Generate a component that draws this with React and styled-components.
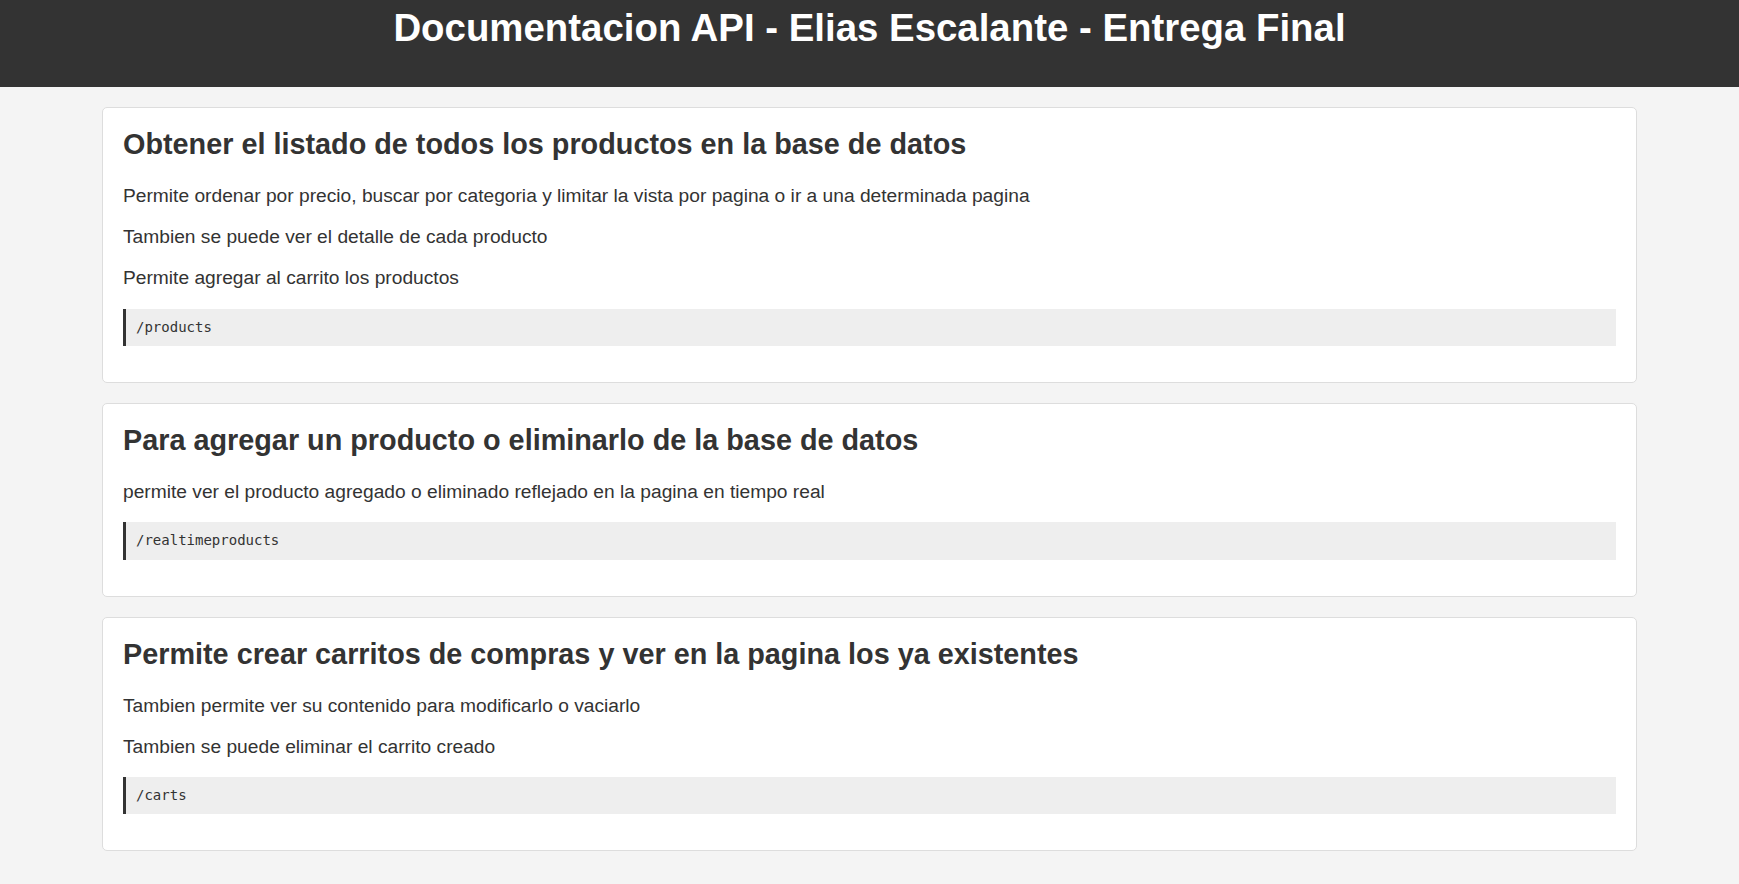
import React from "react";
import styled, { createGlobalStyle } from "styled-components";

const GlobalStyle = createGlobalStyle`
  html, body {
    margin: 0;
    padding: 0;
    background: #f4f4f4;
    font-family: "Liberation Sans", Arial, sans-serif;
    color: #333;
  }
`;

const Header = styled.header`
  background: #333;
  color: #fff;
  height: 87px;
  box-sizing: border-box;
  padding-top: 6px;
  text-align: center;
`;

const Title = styled.h1`
  margin: 0;
  font-size: 38.4px;
  font-weight: 700;
`;

const Main = styled.main`
  padding: 20px 102px;
  display: flex;
  flex-direction: column;
  gap: 20px;
`;

const Card = styled.section`
  background: #fff;
  border: 1px solid #ddd;
  border-radius: 5px;
  padding: 20px;
`;

const CardTitle = styled.h2`
  margin: 0 0 24px;
  font-size: 28.8px;
  font-weight: 700;
  color: #333;
`;

const Text = styled.p`
  margin: 0 0 19.2px;
  font-size: 19.2px;
  color: #333;
`;

const Endpoint = styled.pre`
  margin: 19.2px 0 16px;
  background: #eee;
  border-left: 3px solid #333;
  padding: 10px 10px;
  font-family: "DejaVu Sans Mono", "Liberation Mono", monospace;
  font-size: 14px;
  line-height: 17.4px;
  color: #333;
`;

const sections = [
  {
    title: "Obtener el listado de todos los productos en la base de datos",
    lines: [
      "Permite ordenar por precio, buscar por categoria y limitar la vista por pagina o ir a una determinada pagina",
      "Tambien se puede ver el detalle de cada producto",
      "Permite agregar al carrito los productos",
    ],
    path: "/products",
  },
  {
    title: "Para agregar un producto o eliminarlo de la base de datos",
    lines: [
      "permite ver el producto agregado o eliminado reflejado en la pagina en tiempo real",
    ],
    path: "/realtimeproducts",
  },
  {
    title: "Permite crear carritos de compras y ver en la pagina los ya existentes",
    lines: [
      "Tambien permite ver su contenido para modificarlo o vaciarlo",
      "Tambien se puede eliminar el carrito creado",
    ],
    path: "/carts",
  },
];

export default function App() {
  return (
    <>
      <GlobalStyle />
      <Header>
        <Title>Documentacion API - Elias Escalante - Entrega Final</Title>
      </Header>
      <Main>
        {sections.map((s) => (
          <Card key={s.path}>
            <CardTitle>{s.title}</CardTitle>
            {s.lines.map((l) => (
              <Text key={l}>{l}</Text>
            ))}
            <Endpoint>{s.path}</Endpoint>
          </Card>
        ))}
      </Main>
    </>
  );
}
